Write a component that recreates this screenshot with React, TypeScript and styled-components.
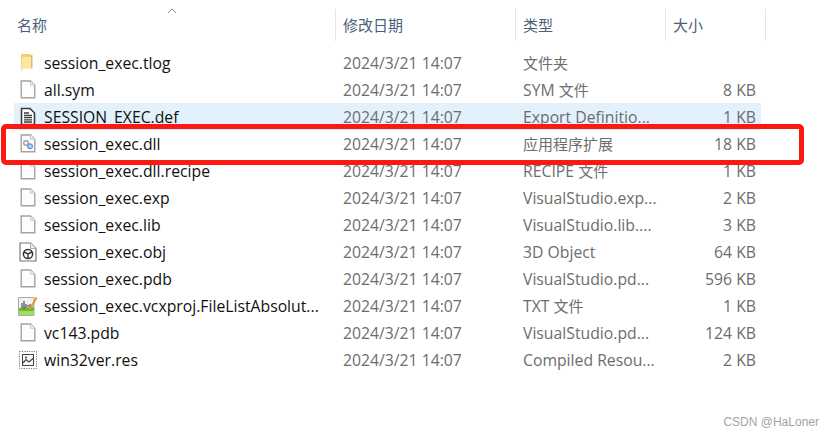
import React from "react";
import styled, { createGlobalStyle } from "styled-components";

const Global = createGlobalStyle`
  html, body { margin: 0; padding: 0; background: #fff; }
  #root { width: 835px; height: 437px; overflow: hidden; }
`;

const FONT = `"Open Sans", "Noto Sans CJK SC", "Noto Sans", sans-serif`;

const Page = styled.div`
  position: relative;
  width: 835px;
  height: 437px;
  background: #fff;
  font-family: ${FONT};
  font-size: 15.75px;
  overflow: hidden;
`;

const Header = styled.div`
  display: grid;
  grid-template-columns: 336px 180px 150px 100px;
  height: 32px;
  margin-top: 9px;
`;

const HeaderCell = styled.div<{ $pad: number }>`
  display: flex;
  align-items: center;
  padding-left: ${(p) => p.$pad}px;
  padding-bottom: 2px;
  box-sizing: border-box;
  border-right: 1px solid #e5e5e5;
  color: #4c607a;
  font-size: 15px;
  position: relative;
`;

const SortCaret = styled.svg`
  position: absolute;
  left: 167px;
  top: -1px;
`;

const List = styled.div`
  padding-top: 8px;
  padding-left: 14px;
  width: 747px;
`;

const Row = styled.div<{ $selected?: boolean }>`
  display: grid;
  grid-template-columns: 30px 299px 180px 160px 73px;
  align-items: center;
  height: 27px;
  line-height: 25px;
  padding-top: 2px;
  box-sizing: border-box;
  background: ${(p) => (p.$selected ? "#e3f1fc" : "transparent")};
`;

const IconCell = styled.div`
  display: flex;
  align-items: center;
  justify-content: center;
  padding-right: 1px;
  margin-left: -1px;
  margin-top: -2px;
`;

const Name = styled.div`
  color: #111;
  white-space: nowrap;
  overflow: hidden;
`;

const Meta = styled.div`
  color: #6d6d6d;
  white-space: nowrap;
`;

const Size = styled(Meta)`
  text-align: right;
`;

const Cjk = styled.span`
  font-size: 15px;
`;

const Highlight = styled.div`
  position: absolute;
  left: 1px;
  top: 124px;
  width: 793px;
  height: 31px;
  border: 5px solid #fb1a12;
  border-radius: 5px;
`;

const Watermark = styled.div`
  position: absolute;
  right: 16px;
  top: 415px;
  font-family: "Liberation Sans", Arial, sans-serif;
  font-size: 12px;
  color: #a3a3a3;
`;

const Sheet = ({ children }: { children?: React.ReactNode }) => (
  <svg width="16" height="19" viewBox="0 0 16 19">
    <path d="M1.2 1H10.5L14.8 5.3V17.8H1.2Z" fill="#fdfdfd" stroke="#a3a3a3" strokeWidth="1.4" />
    <path d="M10.5 1V5.3H14.8" fill="#f0f0f0" stroke="#c8c8c8" />
    {children}
  </svg>
);

const Folder = () => (
  <svg width="16" height="19" viewBox="0 0 16 19">
    <path d="M1 1H10L12 3V15H3.5L1 18Z" fill="#f0cd6e" />
    <path d="M3 4H12V15.5H3.5L1.5 18V6Z" fill="#fbe7a4" />
    <path d="M11 2H12.5V15.5H11Z" fill="#e3b95a" />
  </svg>
);

const TextDoc = () => (
  <svg width="16" height="19" viewBox="0 0 16 19">
    <path d="M1.5 1.5H10L14.5 6V17.5H1.5Z" fill="#fff" stroke="#3c3c3c" strokeWidth="1.6" />
    <path d="M4 6H9M4 8.5H12M4 10.7H12M4 12.9H12M4 15H12" stroke="#3c3c3c" strokeWidth="1.3" />
  </svg>
);

const Dll = () => (
  <Sheet>
    <circle cx="6" cy="9" r="2.3" fill="none" stroke="#a2a2a2" strokeWidth="1.4" />
    <circle cx="10" cy="12.3" r="2.6" fill="#8cc0e8" stroke="#4f93cf" />
    <path d="M8.6 10.9L11.4 13.7" stroke="#fff" strokeWidth="0.8" />
  </Sheet>
);

const Obj = () => (
  <svg width="18" height="20" viewBox="0 0 18 20">
    <path d="M1 1H11.5L17 6.5V19H1Z" fill="#fff" stroke="#777" strokeWidth="1.2" />
    <path d="M11.5 1V6.5H17" fill="#eee" stroke="#aaa" />
    <circle cx="9" cy="12" r="4.6" fill="none" stroke="#333" strokeWidth="1.5" />
    <path d="M5 10L9 12L13 10M9 12V16.5" fill="none" stroke="#333" strokeWidth="1.4" />
  </svg>
);

const Txt = () => (
  <svg width="20" height="20" viewBox="0 0 20 20">
    <path d="M0.5 1.5H16V19.5H0.5Z" fill="#f1f4ee" stroke="#a9a9a9" />
    <path d="M1 12L16 11V19H1Z" fill="#6cb82f" />
    <path d="M1 15L16 15V19H1Z" fill="#a4dc62" />
    <path d="M4 7V12M6 5V13M8 8V12M10 9V11M12 8V11" stroke="#333" strokeWidth="1" />
    <path d="M12 13L18.5 1.5" stroke="#e8912c" strokeWidth="2" />
  </svg>
);

const Res = () => (
  <svg width="18" height="18" viewBox="0 0 18 18">
    <rect x="0.5" y="0.5" width="17" height="17" fill="#fff" stroke="#777" strokeDasharray="1.2 1.2" />
    <rect x="3.5" y="3.5" width="11" height="11" fill="#f7f7f7" stroke="#444" />
    <path d="M4 12L7 8.5L10 11L14 7.5" fill="none" stroke="#444" strokeWidth="1.2" />
    <circle cx="7" cy="6.5" r="1" fill="#444" />
  </svg>
);

const DATE = "2024/3/21 14:07";

const files: { icon: React.ReactNode; name: string; type: React.ReactNode; size: string; selected?: boolean }[] = [
  { icon: <Folder />, name: "session_exec.tlog", type: <Cjk>文件夹</Cjk>, size: "" },
  { icon: <Sheet />, name: "all.sym", type: <>SYM <Cjk>文件</Cjk></>, size: "8 KB" },
  { icon: <TextDoc />, name: "SESSION_EXEC.def", type: "Export Definitio...", size: "1 KB", selected: true },
  { icon: <Dll />, name: "session_exec.dll", type: <Cjk>应用程序扩展</Cjk>, size: "18 KB" },
  { icon: <Sheet />, name: "session_exec.dll.recipe", type: <>RECIPE <Cjk>文件</Cjk></>, size: "1 KB" },
  { icon: <Sheet />, name: "session_exec.exp", type: "VisualStudio.exp...", size: "2 KB" },
  { icon: <Sheet />, name: "session_exec.lib", type: "VisualStudio.lib....", size: "3 KB" },
  { icon: <Obj />, name: "session_exec.obj", type: "3D Object", size: "64 KB" },
  { icon: <Sheet />, name: "session_exec.pdb", type: "VisualStudio.pd...", size: "596 KB" },
  { icon: <Txt />, name: "session_exec.vcxproj.FileListAbsolut...", type: <>TXT <Cjk>文件</Cjk></>, size: "1 KB" },
  { icon: <Sheet />, name: "vc143.pdb", type: "VisualStudio.pd...", size: "124 KB" },
  { icon: <Res />, name: "win32ver.res", type: "Compiled Resou...", size: "2 KB" },
];

export default function App() {
  return (
    <Page>
      <Global />
      <Header>
        <HeaderCell $pad={17}>
          名称
          <SortCaret width="10" height="6" viewBox="0 0 10 6">
            <path d="M1 5L5 1L9 5" fill="none" stroke="#8a8a8a" />
          </SortCaret>
        </HeaderCell>
        <HeaderCell $pad={7}>修改日期</HeaderCell>
        <HeaderCell $pad={7}>类型</HeaderCell>
        <HeaderCell $pad={7}>大小</HeaderCell>
      </Header>
      <List>
        {files.map((f) => (
          <Row key={f.name} $selected={f.selected}>
            <IconCell>{f.icon}</IconCell>
            <Name>{f.name}</Name>
            <Meta>{DATE}</Meta>
            <Meta>{f.type}</Meta>
            <Size>{f.size}</Size>
          </Row>
        ))}
      </List>
      <Highlight />
      <Watermark>CSDN @HaLoner</Watermark>
    </Page>
  );
}
